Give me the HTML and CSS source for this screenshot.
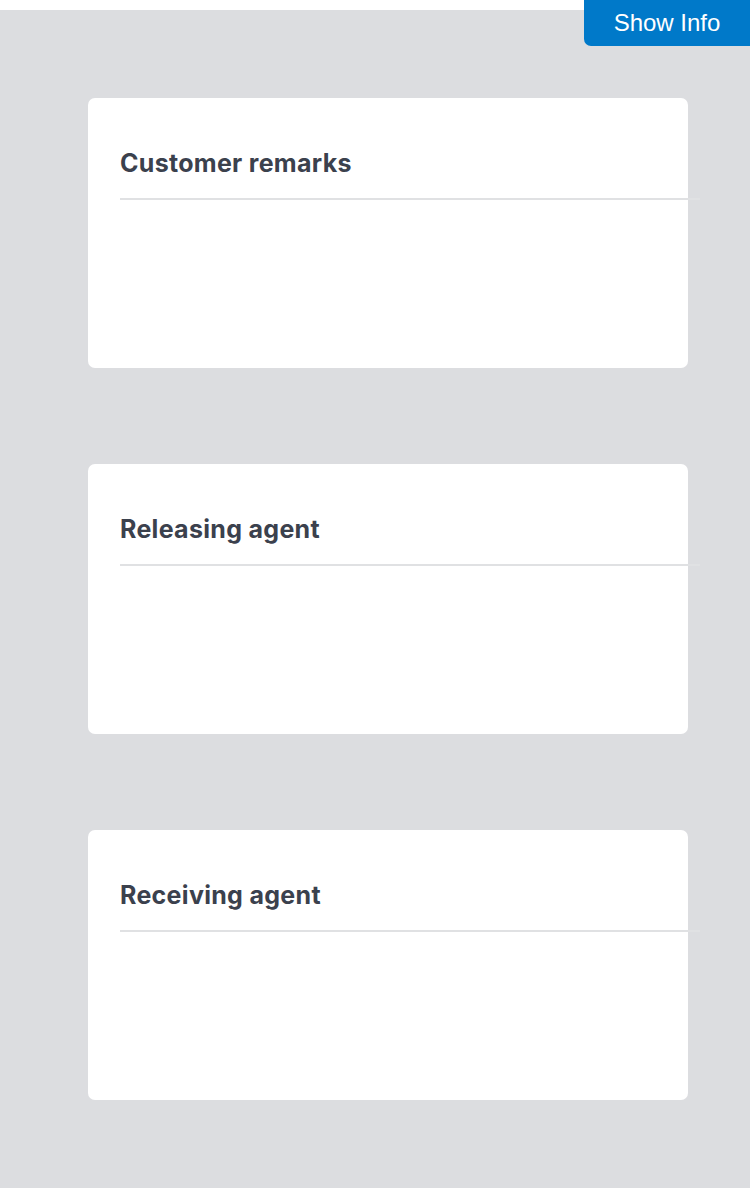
FILE: index.html
```html
<!DOCTYPE html>
<html>
<head>
<meta charset="utf-8">
<link rel="stylesheet" href="styles.css">
</head>
<body>
<div class="topbar">
  <button class="info-btn">Show Info</button>
</div>
<main class="page">
  <section class="card">
    <h2 class="card-title">Customer remarks</h2>
    <div class="divider"></div>
    <div class="card-body"></div>
  </section>
  <section class="card">
    <h2 class="card-title">Releasing agent</h2>
    <div class="divider"></div>
    <div class="card-body"></div>
  </section>
  <section class="card">
    <h2 class="card-title">Receiving agent</h2>
    <div class="divider"></div>
    <div class="card-body"></div>
  </section>
</main>
</body>
</html>
```
FILE: styles.css
```css
html, body {
  margin: 0;
  padding: 0;
  background: #ffffff;
}
body {
  width: 750px;
  height: 1188px;
  overflow: hidden;
  position: relative;
}
.topbar {
  height: 10px;
  background: #ffffff;
}
.info-btn {
  position: absolute;
  top: 0;
  right: 0;
  width: 166px;
  height: 46px;
  border: none;
  margin: 0;
  padding: 0;
  background: #0079c9;
  color: #ffffff;
  font-family: "Liberation Sans", Arial, sans-serif;
  font-size: 24px;
  border-bottom-left-radius: 7px;
  z-index: 2;
}
.page {
  background: #dcdde0;
  padding: 88px;
  display: flex;
  flex-direction: column;
  gap: 96px;
  height: 1178px;
  box-sizing: border-box;
}
.card {
  background: #ffffff;
  border-radius: 7px;
  width: 600px;
  height: 270px;
  box-sizing: border-box;
  padding: 49px 0 0 32px;
  display: flex;
  flex-direction: column;
}
.card-title {
  margin: 0;
  font-family: Inter, "Noto Sans", sans-serif;
  font-weight: 700;
  font-size: 25px;
  line-height: 32px;
  letter-spacing: 0.3px;
  color: #3b414d;
}
.divider {
  margin-top: 19px;
  width: 580px;
  height: 2px;
  background: #e0e1e3;
}
.card-body {
  flex: 1;
}
```
